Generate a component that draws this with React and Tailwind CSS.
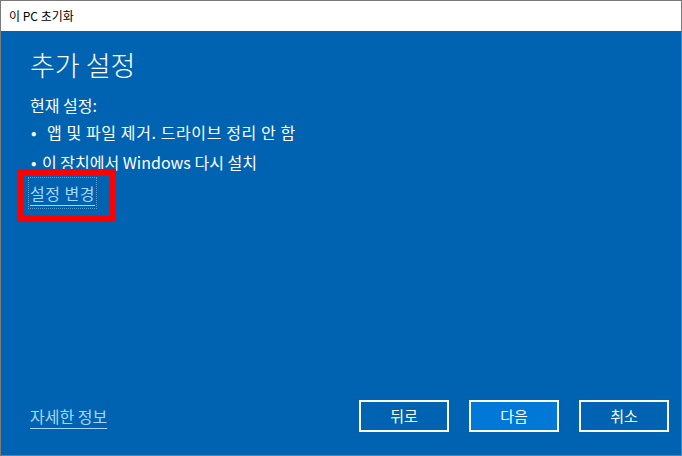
import React from 'react';

function App() {
  return (
    <div
      className="w-[682px] h-[456px] border border-[#7a7a7a] flex flex-col bg-white overflow-hidden"
      style={{ fontFamily: '"Noto Sans CJK KR", "Noto Sans", sans-serif' }}
    >
      <div className="h-[30px] flex items-center px-[8px] text-[12px] text-black bg-white">이 PC 초기화</div>
      <div className="flex-1 bg-[#0063b1] flex flex-col text-white px-[29px] pb-[23px]">
        <h1 className="text-[27px] font-light leading-[26px] pt-[21px]">추가 설정</h1>
        <div className="text-[16px] leading-[20px] mt-[17px]">현재 설정:</div>
        <div className="text-[16px] leading-[30px] mt-[2px] flex">
          <span className="w-[17px] pl-[1px]">•</span>
          <span className="tracking-[0.6px]">앱 및 파일 제거. 드라이브 정리 안 함</span>
        </div>
        <div className="text-[16px] leading-[30px] flex">
          <span className="w-[12px] pl-[1px]">•</span>
          <span>이 장치에서 Windows 다시 설치</span>
        </div>
        <div className="relative w-fit -ml-[2px]">
          <div className="absolute -left-[10px] -top-[8px] w-[98px] h-[53px] border-[6px] border-[#ff0000]" />
          <div className="border border-dotted border-[#5f9bd0] px-[1px] py-[3px]">
            <span className="text-[16px] leading-[20px] text-[#a6d8ff] underline underline-offset-[5px] tracking-[0.5px]">설정 변경</span>
          </div>
        </div>
        <div className="flex-1" />
        <div className="flex items-center">
          <span className="text-[16px] text-[#a6d8ff] underline underline-offset-[5px]">자세한 정보</span>
          <div className="flex-1" />
          <div className="flex gap-[20px] mr-[-17px]">
            <button className="w-[90px] h-[32px] border-2 border-white text-[15px] text-white">뒤로</button>
            <button className="w-[90px] h-[32px] border-2 border-white bg-[#0078d7] text-[15px] text-white">다음</button>
            <button className="w-[90px] h-[32px] border-2 border-white text-[15px] text-white">취소</button>
          </div>
        </div>
      </div>
    </div>
  );
}

export default App;
